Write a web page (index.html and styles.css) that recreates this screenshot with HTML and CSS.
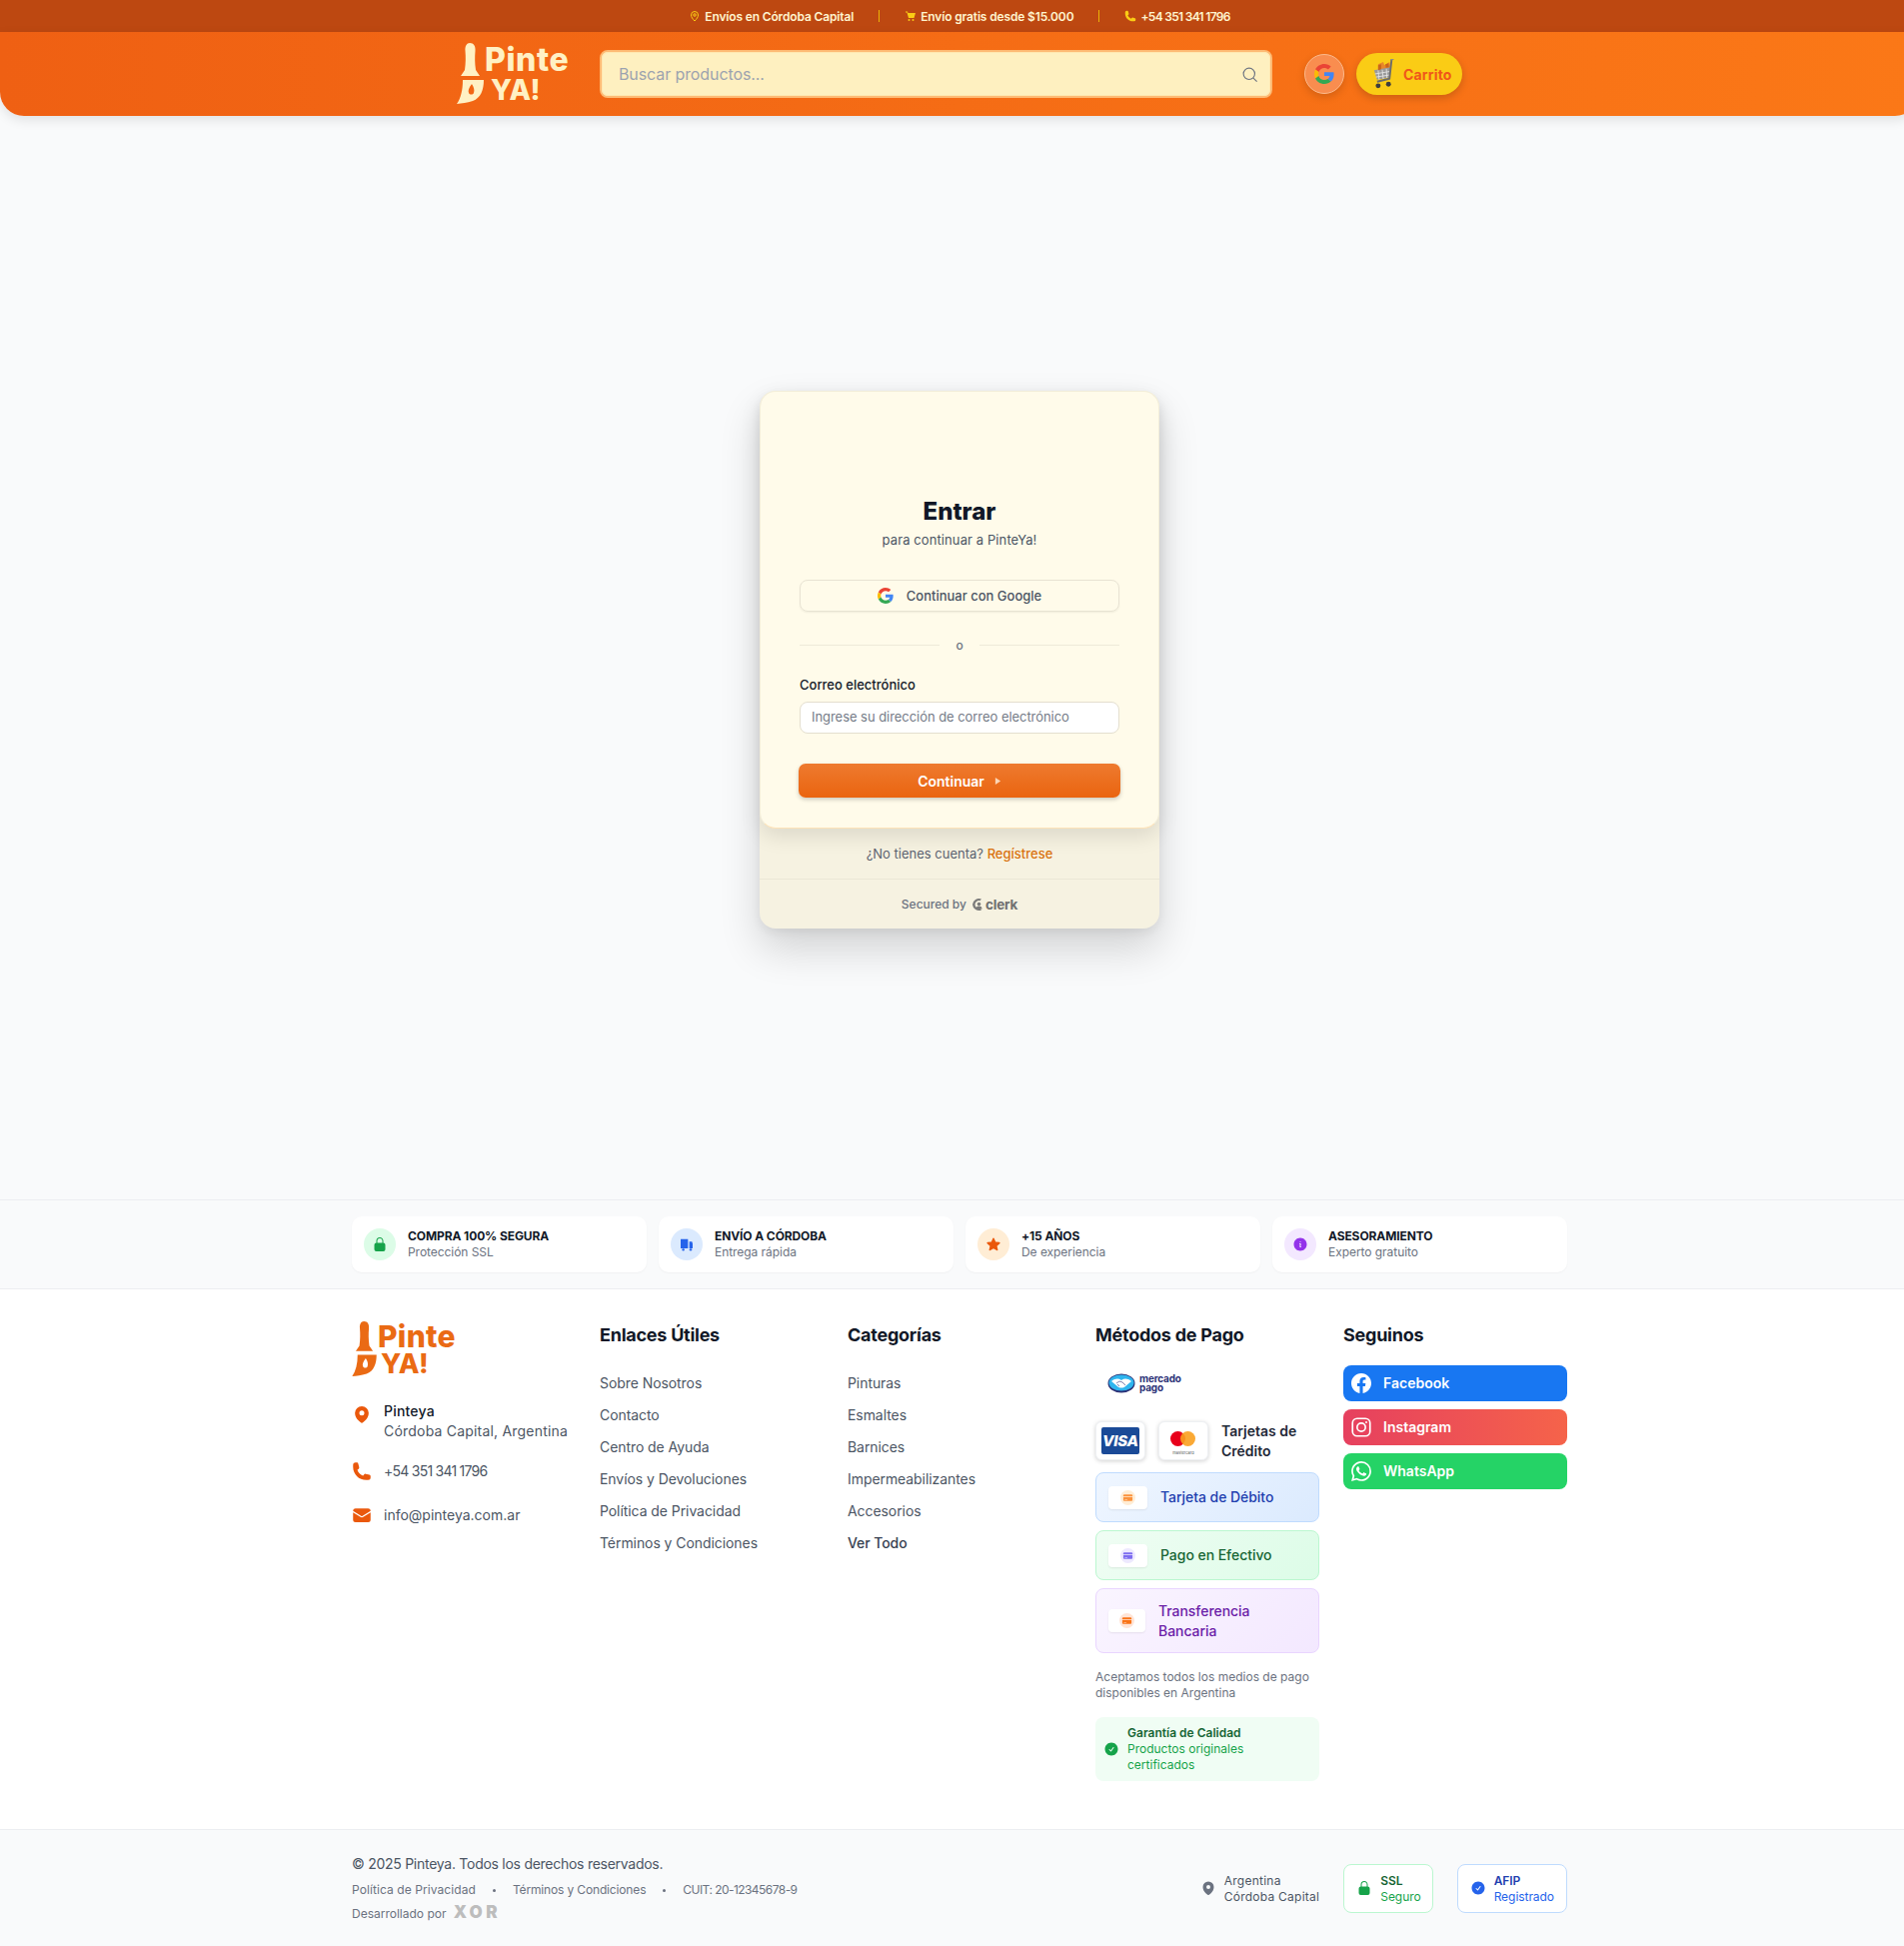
FILE: index.html
```html
<!DOCTYPE html>
<html lang="es">
  <head>
    <meta charset="UTF-8" />
    <meta name="viewport" content="width=device-width, initial-scale=1.0" />
    <title>Pinteya - Entrar</title>
    <link rel="stylesheet" href="styles.css">
  </head>
  <body>
    <svg class="sprite" xmlns="http://www.w3.org/2000/svg">
      <symbol id="i-brush" viewBox="0 0 28 62">
        <path d="M13 0C17 0 19 3 18.5 8C18 14 18 20 19 27L23 33L4 33L8 27C9 20 9 14 8.5 8C8 3 10 0 13 0Z"/>
        <path fill-rule="evenodd" d="M6 37L27 37C27 47 24 55 16 58C10 60 5 60 0 61C4 55 6 47 6 37ZM15 41C12 45 11 48 12 50C13 52 16 52 17 50C18 47 17 44 15 41Z"/>
      </symbol>
      <symbol id="i-google" viewBox="0 0 48 48">
        <path fill="#EA4335" d="M24 9.5c3.54 0 6.71 1.22 9.21 3.6l6.85-6.85C35.9 2.38 30.47 0 24 0 14.62 0 6.51 5.38 2.56 13.22l7.98 6.19C12.43 13.72 17.74 9.5 24 9.5z"/>
        <path fill="#4285F4" d="M46.98 24.55c0-1.57-.15-3.09-.38-4.55H24v9.02h12.94c-.58 2.96-2.26 5.48-4.78 7.18l7.73 6c4.51-4.18 7.09-10.36 7.09-17.65z"/>
        <path fill="#FBBC05" d="M10.53 28.59c-.48-1.45-.76-2.99-.76-4.59s.27-3.14.76-4.59l-7.98-6.19C.92 16.46 0 20.12 0 24c0 3.88.92 7.54 2.56 10.78l7.97-6.19z"/>
        <path fill="#34A853" d="M24 48c6.48 0 11.93-2.13 15.89-5.81l-7.73-6c-2.15 1.45-4.92 2.3-8.16 2.3-6.26 0-11.57-4.22-13.47-9.91l-7.98 6.19C6.51 42.62 14.62 48 24 48z"/>
      </symbol>
      <symbol id="i-pin" viewBox="0 0 24 24">
        <path fill-rule="evenodd" d="M11.54 22.351l.07.04.028.016a.76.76 0 00.723 0l.028-.015.071-.041a16.975 16.975 0 001.144-.742 19.58 19.58 0 002.683-2.282c1.944-1.99 3.963-4.98 3.963-8.827a8.25 8.25 0 00-16.5 0c0 3.846 2.02 6.837 3.963 8.827a19.58 19.58 0 002.682 2.282 16.975 16.975 0 001.145.742zM12 13.5a3 3 0 100-6 3 3 0 000 6z"/>
      </symbol>
      <symbol id="i-phone" viewBox="0 0 24 24">
        <path d="M1.5 4.5a3 3 0 013-3h1.372c.86 0 1.61.586 1.819 1.42l1.105 4.423a1.875 1.875 0 01-.694 1.955l-1.293.97c-.135.101-.164.249-.126.352a11.285 11.285 0 006.697 6.697c.103.038.25.009.352-.126l.97-1.293a1.875 1.875 0 011.955-.694l4.423 1.105c.834.209 1.42.959 1.42 1.82V19.5a3 3 0 01-3 3h-2.25C8.552 22.5 1.5 15.448 1.5 6.75V4.5z"/>
      </symbol>
      <symbol id="i-mail" viewBox="0 0 24 24">
        <path d="M1.5 8.67v8.58a3 3 0 003 3h15a3 3 0 003-3V8.67l-8.928 5.493a3 3 0 01-3.144 0L1.5 8.67z"/>
        <path d="M22.5 6.908V6.75a3 3 0 00-3-3h-15a3 3 0 00-3 3v.158l9.714 5.978a1.5 1.5 0 001.572 0L22.5 6.908z"/>
      </symbol>
      <symbol id="i-lock" viewBox="0 0 24 24">
        <path fill-rule="evenodd" d="M12 1.5a5.25 5.25 0 00-5.25 5.25v3a3 3 0 00-3 3v6.75a3 3 0 003 3h10.5a3 3 0 003-3v-6.75a3 3 0 00-3-3v-3c0-2.9-2.35-5.25-5.25-5.25zm3.75 8.25v-3a3.75 3.75 0 10-7.5 0v3h7.5z"/>
      </symbol>
      <symbol id="i-check" viewBox="0 0 24 24">
        <path fill-rule="evenodd" d="M2.25 12c0-5.385 4.365-9.75 9.75-9.75s9.75 4.365 9.75 9.75-4.365 9.75-9.75 9.75S2.25 17.385 2.25 12zm13.36-1.814a.75.75 0 10-1.22-.872l-3.236 4.53L9.53 12.22a.75.75 0 00-1.06 1.06l2.25 2.25a.75.75 0 001.14-.094l3.75-5.25z"/>
      </symbol>
      <symbol id="i-card" viewBox="0 0 24 24">
        <path d="M2 7a2 2 0 012-2h16a2 2 0 012 2v2H2V7z"/>
        <path d="M2 11h20v6a2 2 0 01-2 2H4a2 2 0 01-2-2v-6zm3 4v1.5h6V15H5z" fill-rule="evenodd"/>
      </symbol>
    </svg>

    <div class="page">
      <div class="topbar">
        <span class="topbar-item">
          <svg class="topbar-icon topbar-icon-line" viewBox="0 0 24 24"><path d="M12 22c-4-4-7-8-7-12a7 7 0 0 1 14 0c0 4-3 8-7 12z"/><circle cx="12" cy="10" r="2.5"/></svg>
          Envíos en Córdoba Capital
        </span>
        <span class="topbar-sep"></span>
        <span class="topbar-item">
          <svg class="topbar-icon" viewBox="0 0 24 24"><path d="M2 3h4l1 3h15l-3 10H8L5 5H2z"/><circle cx="9" cy="20" r="2"/><circle cx="17" cy="20" r="2"/></svg>
          Envío gratis desde $15.000
        </span>
        <span class="topbar-sep"></span>
        <span class="topbar-item topbar-tel"><svg class="topbar-icon"><use href="#i-phone"/></svg>+54 351 341 1796</span>
      </div>

      <header class="header">
        <a class="logo logo-light">
          <svg class="logo-brush"><use href="#i-brush"/></svg>
          <span class="logo-text"><span>Pinte</span><span class="logo-ya">YA!</span></span>
        </a>
        <div class="search">
          <span class="search-text">Buscar productos...</span>
          <svg class="search-icon" viewBox="0 0 24 24"><circle cx="11" cy="11" r="8"/><path d="M17 17l5 5"/></svg>
        </div>
        <div class="user-btn"><svg class="user-g"><use href="#i-google"/></svg></div>
        <div class="cart-btn">
          <svg class="cart-img" viewBox="0 0 24 30">
            <path d="M20 1l3-1" stroke="#8a8a8a" stroke-width="1.600" fill="none"/>
            <path d="M8 5l5-2 1 3 5-3 1 6-12 3z" fill="#e8872a"/>
            <path d="M4 11l16-3-1 10-12 2z" fill="#9a9a9a"/>
            <path d="M8 11l1 9M12 10.500l1 9M16 9.500l.5 9M5 14.500l15-2.500M6 17.500l13-2" stroke="#e8e8e8" stroke-width=".8" fill="none"/>
            <path d="M21 1l-2 18-12 3" stroke="#6b6b6b" stroke-width="1.800" fill="none"/>
            <path d="M8 6l3-1v5l-3 1zM15 5l3-1 .5 4-3 .5z" fill="#c9651a"/>
            <circle cx="8" cy="26" r="2.400" fill="#3d3d3d"/><circle cx="18" cy="24.500" r="2.400" fill="#3d3d3d"/>
          </svg>
          Carrito
        </div>
      </header>

      <main class="main">
        <div class="login">
          <div class="login-card">
            <h1>Entrar</h1>
            <p class="login-sub">para continuar a PinteYa!</p>
            <div class="google-btn"><svg class="g-icon"><use href="#i-google"/></svg>Continuar con Google</div>
            <div class="divider"><span></span><b>o</b><span></span></div>
            <label class="field-label">Correo electrónico</label>
            <div class="field-input">Ingrese su dirección de correo electrónico</div>
            <div class="submit-btn">Continuar <svg class="submit-arrow" viewBox="0 0 8 8"><path d="M1 0l6 4-6 4z"/></svg></div>
          </div>
          <div class="login-foot">
            <div class="login-signup">¿No tienes cuenta? <a>Regístrese</a></div>
            <div class="login-secured">
              Secured by
              <svg class="clerk-mark" viewBox="0 0 14 14"><path d="M11 1.500A6.500 6.500 0 0 0 2 7a6.500 6.500 0 0 0 9 5.500l-1.600-1.700A4 4 0 0 1 4.500 7 4 4 0 0 1 9.400 3.200z"/><circle cx="8.500" cy="6.500" r="1.800"/><path d="M5.500 11.500a3 3 0 0 1 6 0z"/></svg>
              <span class="clerk-word">clerk</span>
            </div>
          </div>
        </div>
      </main>

      <section class="trust">
        <div class="wrap trust-grid">
          <div class="trust-item">
            <span class="trust-ic ic-green"><svg><use href="#i-lock"/></svg></span>
            <div><strong>COMPRA 100% SEGURA</strong><small>Protección SSL</small></div>
          </div>
          <div class="trust-item">
            <span class="trust-ic ic-blue">
              <svg viewBox="0 0 24 24"><path d="M3 4h11v14H3zM16 8h4l1 3v7h-5z"/><circle cx="7" cy="20" r="1.800"/><circle cx="18" cy="20" r="1.800"/></svg>
            </span>
            <div><strong>ENVÍO A CÓRDOBA</strong><small>Entrega rápida</small></div>
          </div>
          <div class="trust-item">
            <span class="trust-ic ic-orange">
              <svg viewBox="0 0 24 24"><path d="M10.788 3.21c.448-1.077 1.976-1.077 2.424 0l2.082 5.007 5.404.433c1.164.093 1.636 1.545.749 2.305l-4.117 3.527 1.257 5.273c.271 1.136-.964 2.033-1.96 1.425L12 18.354 7.373 21.18c-.996.608-2.231-.29-1.96-1.425l1.257-5.273-4.117-3.527c-.887-.76-.415-2.212.749-2.305l5.404-.433 2.082-5.006z"/></svg>
            </span>
            <div><strong>+15 AÑOS</strong><small>De experiencia</small></div>
          </div>
          <div class="trust-item">
            <span class="trust-ic ic-purple">
              <svg viewBox="0 0 24 24"><path fill-rule="evenodd" d="M2.25 12c0-5.385 4.365-9.750 9.750-9.750s9.750 4.365 9.750 9.750-4.365 9.750-9.750 9.750S2.250 17.385 2.250 12zm8.706-1.442c1.146-.573 2.437.463 2.126 1.706l-.709 2.836.042-.02a.75.75 0 01.67 1.34l-.04.022c-1.147.573-2.438-.463-2.127-1.706l.71-2.836-.042.02a.75.75 0 11-.671-1.34l.041-.022zM12 9a.75.75 0 100-1.500.75.75 0 000 1.500z"/></svg>
            </span>
            <div><strong>ASESORAMIENTO</strong><small>Experto gratuito</small></div>
          </div>
        </div>
      </section>

      <footer class="footer">
        <div class="wrap footer-grid">
          <div class="col">
            <a class="logo logo-foot">
              <svg class="logo-brush"><use href="#i-brush"/></svg>
              <span class="logo-text"><span>Pinte</span><span class="logo-ya">YA!</span></span>
            </a>
            <ul class="contact">
              <li><svg class="contact-pin"><use href="#i-pin"/></svg><div class="contact-addr"><b>Pinteya</b><br>Córdoba Capital, Argentina</div></li>
              <li><svg><use href="#i-phone"/></svg><div class="contact-tel">+54 351 341 1796</div></li>
              <li><svg><use href="#i-mail"/></svg><div>info@pinteya.com.ar</div></li>
            </ul>
          </div>
          <div class="col">
            <h3>Enlaces Útiles</h3>
            <ul class="links">
              <li>Sobre Nosotros</li>
              <li>Contacto</li>
              <li>Centro de Ayuda</li>
              <li>Envíos y Devoluciones</li>
              <li>Política de Privacidad</li>
              <li>Términos y Condiciones</li>
            </ul>
          </div>
          <div class="col">
            <h3>Categorías</h3>
            <ul class="links">
              <li>Pinturas</li>
              <li>Esmaltes</li>
              <li>Barnices</li>
              <li>Impermeabilizantes</li>
              <li>Accesorios</li>
              <li class="links-strong">Ver Todo</li>
            </ul>
          </div>
          <div class="col">
            <h3>Métodos de Pago</h3>
            <div class="mp">
              <svg class="mp-mark" viewBox="0 0 28 20">
                <ellipse cx="14" cy="10" rx="13.500" ry="9.500" fill="#2d3277"/>
                <ellipse cx="14" cy="9.500" rx="12.500" ry="8" fill="#2fb5ee"/>
                <path d="M4 8c4-3 7-3 10-1 3-2 6-2 10 1l-6 5c-2 2-6 2-8 0z" fill="#fff"/>
                <path d="M9 10l3-2 3 1 3 3M12 13l-2-2" stroke="#2d3277" stroke-width=".6" fill="none"/>
              </svg>
              <span class="mp-word">mercado<br>pago</span>
            </div>
            <div class="cards-row">
              <div class="card-chip"><span class="visa">VISA</span></div>
              <div class="card-chip">
                <div class="mc"><span class="mc-red"></span><span class="mc-yellow"></span><small>mastercard</small></div>
              </div>
              <div class="cards-text">Tarjetas de Crédito</div>
            </div>
            <div class="pay-row pay-blue">
              <span class="pay-chip"><span class="pay-dot dot-orange"><svg><use href="#i-card"/></svg></span></span>Tarjeta de Débito
            </div>
            <div class="pay-row pay-green">
              <span class="pay-chip"><span class="pay-dot dot-violet"><svg><use href="#i-card"/></svg></span></span>Pago en Efectivo
            </div>
            <div class="pay-row pay-purple">
              <span class="pay-chip pay-chip-sm"><span class="pay-dot dot-peach"><svg><use href="#i-card"/></svg></span></span>Transferencia Bancaria
            </div>
            <p class="pay-note">Aceptamos todos los medios de pago disponibles en Argentina</p>
            <div class="quality">
              <svg><use href="#i-check"/></svg>
              <div><b>Garantía de Calidad</b><span>Productos originales certificados</span></div>
            </div>
          </div>
          <div class="col">
            <h3 class="h-social">Seguinos</h3>
            <div class="social">
              <a class="social-btn fb">
                <svg viewBox="0 0 24 24"><path d="M24 12.073c0-6.627-5.373-12-12-12s-12 5.373-12 12c0 5.990 4.388 10.954 10.125 11.854v-8.385H7.078v-3.470h3.047V9.430c0-3.007 1.792-4.669 4.533-4.669 1.312 0 2.686.235 2.686.235v2.953H15.830c-1.491 0-1.956.925-1.956 1.874v2.250h3.328l-.532 3.470h-2.796v8.385C19.612 23.027 24 18.062 24 12.073z"/></svg>
                Facebook
              </a>
              <a class="social-btn ig">
                <svg viewBox="0 0 24 24" class="ig-svg"><rect x="1.500" y="1.500" width="21" height="21" rx="5.500"/><circle cx="12" cy="12" r="5"/><circle class="ig-dot" cx="18" cy="6" r="1.200"/></svg>
                Instagram
              </a>
              <a class="social-btn wa">
                <svg viewBox="0 0 24 24"><path d="M17.472 14.382c-.297-.149-1.758-.867-2.030-.967-.273-.099-.471-.148-.670.150-.197.297-.767.966-.940 1.164-.173.199-.347.223-.644.075-.297-.150-1.255-.463-2.390-1.475-.883-.788-1.480-1.761-1.653-2.059-.173-.297-.018-.458.130-.606.134-.133.298-.347.446-.520.149-.174.198-.298.298-.497.099-.198.050-.371-.025-.520-.075-.149-.669-1.612-.916-2.207-.242-.579-.487-.500-.669-.510-.173-.008-.371-.010-.570-.010-.198 0-.520.074-.792.372-.272.297-1.040 1.016-1.040 2.479 0 1.462 1.065 2.875 1.213 3.074.149.198 2.096 3.200 5.077 4.487.709.306 1.262.489 1.694.625.712.227 1.360.195 1.871.118.571-.085 1.758-.719 2.006-1.413.248-.694.248-1.289.173-1.413-.074-.124-.272-.198-.570-.347m-5.421 7.403h-.004a9.870 9.870 0 01-5.031-1.378l-.361-.214-3.741.982.998-3.648-.235-.374a9.860 9.860 0 01-1.510-5.260c.001-5.450 4.436-9.884 9.888-9.884 2.640 0 5.122 1.030 6.988 2.898a9.825 9.825 0 012.893 6.994c-.003 5.450-4.437 9.884-9.885 9.884m8.413-18.297A11.815 11.815 0 0012.050 0C5.495 0 .160 5.335.157 11.892c0 2.096.547 4.142 1.588 5.945L.057 24l6.305-1.654a11.882 11.882 0 005.683 1.448h.005c6.554 0 11.890-5.335 11.893-11.893a11.821 11.821 0 00-3.480-8.413z"/></svg>
                WhatsApp
              </a>
            </div>
          </div>
        </div>
      </footer>

      <section class="bottom">
        <div class="wrap bottom-row">
          <div class="legal">
            <p class="copy">© 2025 Pinteya. Todos los derechos reservados.</p>
            <p class="legal-links"><span>Política de Privacidad</span><i></i><span>Términos y Condiciones</span><i></i><span>CUIT: 20-12345678-9</span></p>
            <p class="legal-dev">Desarrollado por <span class="xor">XOR</span></p>
          </div>
          <div class="badges">
            <div class="place"><svg><use href="#i-pin"/></svg><div>Argentina<br>Córdoba Capital</div></div>
            <div class="badge badge-green"><svg><use href="#i-lock"/></svg><div><b>SSL</b><span>Seguro</span></div></div>
            <div class="badge badge-blue"><svg><use href="#i-check"/></svg><div><b>AFIP</b><span>Registrado</span></div></div>
          </div>
        </div>
      </section>
    </div>
  </body>
</html>
```

FILE: styles.css
```css
html,
body {
  margin: 0;
  overflow-x: hidden;
}
body {
  font-family: 'Inter', 'Liberation Sans', sans-serif;
  background: #f9fafb;
  color: #111827;
}
.sprite {
  display: none;
}
.page {
  width: 1920px;
}
ul {
  list-style: none;
  margin: 0;
  padding: 0;
}
p {
  margin: 0;
}
.wrap {
  width: 1216px;
  margin: 0 auto;
}

/* top bar */
.topbar {
  height: 32px;
  background: #bd4811;
  color: #fff4cf;
  font-size: 12px;
  font-weight: 600;
  display: flex;
  align-items: center;
  justify-content: center;
  gap: 25px;
  letter-spacing: -0.15px;
}
.topbar-item {
  display: flex;
  align-items: center;
  gap: 4px;
}
.topbar-tel {
  letter-spacing: -0.7px;
}
.topbar-icon {
  width: 12px;
  height: 12px;
  fill: #facc15;
}
.topbar-icon-line {
  fill: none;
  stroke: #facc15;
  stroke-width: 2;
}
.topbar-sep {
  width: 1px;
  height: 12px;
  background: #eab308;
}

/* header */
.header {
  height: 84px;
  background: linear-gradient(90deg, #ef6013 0%, #fb7817 100%);
  border-radius: 0 0 24px 24px;
  display: flex;
  align-items: center;
  justify-content: center;
  box-shadow: 0 4px 12px rgba(0, 0, 0, 0.1);
  position: relative;
}
.logo {
  display: flex;
  align-items: flex-start;
  font-weight: 800;
}
.logo-brush {
  flex: none;
  fill: currentColor;
}
.logo-text {
  display: flex;
  flex-direction: column;
}
.logo-ya {
  margin-left: 6px;
}
.logo-light {
  width: 113px;
  color: #fff1c4;
  margin-right: 30px;
}
.logo-light .logo-brush {
  width: 28px;
  height: 62px;
}
.logo-light .logo-text {
  font-size: 32px;
  line-height: 33px;
  letter-spacing: 0.6px;
}
.logo-light .logo-ya {
  font-size: 28px;
  line-height: 29px;
  letter-spacing: -0.4px;
}
.logo-foot {
  color: #ea6a14;
}
.logo-foot .logo-brush {
  width: 26px;
  height: 56px;
}
.logo-foot .logo-text {
  font-size: 30px;
  line-height: 30px;
  letter-spacing: 0.3px;
}
.logo-foot .logo-ya {
  margin-left: 3px;
  font-size: 27px;
  line-height: 26px;
  letter-spacing: -0.4px;
}
.search {
  width: 673px;
  height: 48px;
  box-sizing: border-box;
  background: #fef0c0;
  border: 2px solid #fdba74;
  outline: 1px solid #ffe7b0;
  outline-offset: -3px;
  border-radius: 8px;
  display: flex;
  align-items: center;
  justify-content: space-between;
  padding: 0 12px 0 17px;
  font-size: 16px;
  color: #9ca3af;
  letter-spacing: -0.1px;
  margin-right: 32px;
}
.search-icon {
  width: 17px;
  height: 17px;
  fill: none;
  stroke: #6b7280;
  stroke-width: 1.6;
}
.user-btn {
  width: 40px;
  height: 40px;
  border-radius: 50%;
  background: #f98d4f;
  border: 1px solid #fdba8c;
  box-sizing: border-box;
  display: flex;
  align-items: center;
  justify-content: center;
  margin-right: 12px;
  box-shadow: 0 3px 8px rgba(0, 0, 0, 0.15);
}
.user-g {
  width: 20px;
  height: 20px;
}
.cart-btn {
  width: 106px;
  height: 42px;
  background: #facc15;
  border-radius: 21px;
  display: flex;
  align-items: center;
  gap: 8px;
  padding-left: 13px;
  box-sizing: border-box;
  font-size: 14px;
  font-weight: 700;
  letter-spacing: 0.15px;
  color: #f0561a;
  box-shadow: 0 3px 8px rgba(0, 0, 0, 0.18);
}
.cart-img {
  flex: none;
  width: 26px;
  height: 31px;
}

/* login */
.main {
  height: 1084px;
  box-sizing: border-box;
  padding-top: 4px;
  display: flex;
  align-items: center;
  justify-content: center;
}
.login {
  width: 400px;
  border-radius: 16px;
  background: #f6f2e1;
  box-shadow: 0 20px 40px rgba(0, 0, 0, 0.16), 0 4px 10px rgba(0, 0, 0, 0.06);
}
.login-card {
  height: 438px;
  box-sizing: border-box;
  background: #fffbea;
  border-radius: 16px;
  padding: 104px 40px 0;
  box-shadow: 0 8px 20px rgba(0, 0, 0, 0.1);
  border: 1px solid #f3eeda;
  border-bottom-color: #fde2b8;
  text-align: center;
}
h1 {
  margin: 0;
  font-size: 24px;
  line-height: 32px;
  font-weight: 800;
}
.login-sub {
  font-size: 13px;
  line-height: 20px;
  margin-top: 2px;
  color: #4b5563;
  letter-spacing: 0.1px;
}
.google-btn {
  height: 32px;
  margin: 30px -1px 0;
  box-sizing: border-box;
  border: 1px solid #e8e3d3;
  border-radius: 8px;
  box-shadow: 0 1px 2px rgba(0, 0, 0, 0.06);
  display: flex;
  align-items: center;
  justify-content: center;
  gap: 13px;
  font-size: 13px;
  font-weight: 500;
  color: #4b5563;
}
.g-icon {
  width: 16px;
  height: 16px;
}
.divider {
  display: flex;
  align-items: center;
  gap: 16px;
  height: 16px;
  margin: 25px -1px 0;
}
.divider span {
  flex: 1;
  height: 1px;
  background: #eeead9;
}
.divider b {
  font-size: 12px;
  font-weight: 500;
  color: #6b7280;
}
.field-label {
  display: block;
  text-align: left;
  margin: 24px -1px 0;
  font-size: 13px;
  line-height: 16px;
  font-weight: 500;
}
.field-input {
  height: 32px;
  margin: 9px -1px 0;
  box-sizing: border-box;
  background: #fff;
  border: 1px solid #e4dfcf;
  border-radius: 8px;
  padding: 0 11px;
  text-align: left;
  font-size: 13px;
  line-height: 29px;
  letter-spacing: -0.05px;
  color: #757b87;
}
.submit-btn {
  height: 34px;
  margin: 30px -2px 0;
  background: linear-gradient(180deg, #ee7a2f 0%, #ea640f 100%);
  border-radius: 7px;
  box-shadow: 0 2px 4px rgba(0, 0, 0, 0.2);
  display: flex;
  align-items: center;
  justify-content: center;
  gap: 10px;
  color: #fff;
  font-size: 14px;
  font-weight: 600;
}
.submit-arrow {
  width: 7px;
  height: 7px;
  fill: #fbd5b5;
}
.login-foot {
  font-size: 13px;
  color: #5b6270;
  text-align: center;
}
.login-signup {
  height: 50px;
  line-height: 51px;
  border-bottom: 1px solid #ebe7d6;
}
.login-signup a {
  color: #d9720f;
  font-weight: 500;
}
.login-secured {
  height: 49px;
  display: flex;
  align-items: center;
  justify-content: center;
  gap: 4px;
  font-size: 12px;
  font-weight: 500;
  color: #6b7280;
}
.clerk-mark {
  width: 14px;
  height: 14px;
  fill: #7a7a7a;
}
.clerk-word {
  margin-left: -3px;
  font-size: 13.5px;
  font-weight: 700;
  letter-spacing: -0.2px;
  color: #6f6f6f;
}

/* trust */
.trust {
  height: 90px;
  box-sizing: border-box;
  padding-top: 16px;
  background: #f9fafb;
  border-top: 1px solid #eceef1;
  border-bottom: 1px solid #eceef1;
}
.trust-grid {
  display: grid;
  grid-template-columns: repeat(4, 1fr);
  gap: 12px;
}
.trust-item {
  height: 56px;
  box-sizing: border-box;
  background: #fff;
  border-radius: 10px;
  box-shadow: 0 1px 2px rgba(0, 0, 0, 0.04);
  display: flex;
  align-items: center;
  gap: 12px;
  padding: 0 12px;
  font-size: 12px;
  line-height: 16px;
}
.trust-item strong {
  display: block;
  font-weight: 700;
  letter-spacing: -0.1px;
}
.trust-item small {
  display: block;
  font-size: 12px;
  color: #6b7280;
  letter-spacing: -0.05px;
}
.trust-ic {
  width: 32px;
  height: 32px;
  border-radius: 50%;
  display: flex;
  align-items: center;
  justify-content: center;
}
.trust-ic svg {
  width: 16px;
  height: 16px;
  fill: currentColor;
}
.ic-green {
  background: #dcfce7;
  color: #16a34a;
}
.ic-blue {
  background: #dbeafe;
  color: #2563eb;
}
.ic-orange {
  background: #ffedd5;
  color: #ea580c;
}
.ic-purple {
  background: #f3e8ff;
  color: #9333ea;
}

/* footer */
.footer {
  background: #fff;
  height: 540px;
  box-sizing: border-box;
  padding-top: 32px;
}
.footer-grid {
  display: grid;
  grid-template-columns: repeat(5, 224px);
  gap: 24px;
}
h3 {
  margin: 0 0 24px;
  font-size: 18px;
  line-height: 28px;
  font-weight: 700;
  letter-spacing: -0.25px;
}
.h-social {
  margin-bottom: 15.5px;
}
.contact {
  margin-top: 24px;
  font-size: 14px;
  line-height: 20px;
  color: #4b5563;
}
.contact li {
  display: flex;
  gap: 12px;
  margin-bottom: 24px;
}
.contact li:first-child {
  margin-bottom: 20px;
}
.contact-addr {
  letter-spacing: 0.2px;
}
.contact-tel {
  letter-spacing: -0.75px;
}
.contact svg {
  width: 20px;
  height: 20px;
  flex: none;
  fill: #ea580c;
  margin-top: 0;
}
.contact .contact-pin {
  margin-top: 3px;
}
.contact b {
  font-weight: 500;
  color: #111827;
}
.links {
  font-size: 14px;
  line-height: 20px;
  color: #4b5563;
  letter-spacing: -0.07px;
}
.links li {
  margin-bottom: 12px;
}
.links-strong {
  color: #374151;
  font-weight: 500;
}
.mp {
  height: 20px;
  margin: 0 0 28px 12px;
  display: flex;
  align-items: center;
  gap: 4px;
}
.mp-mark {
  width: 28px;
  height: 20px;
}
.mp-word {
  font-size: 10px;
  line-height: 9px;
  font-weight: 700;
  color: #2d3277;
  letter-spacing: -0.2px;
}
.cards-row {
  display: flex;
  align-items: center;
  height: 39px;
  margin-bottom: 12px;
}
.card-chip {
  width: 50px;
  height: 39px;
  box-sizing: border-box;
  background: #fff;
  border: 1px solid #eef0f3;
  border-radius: 6px;
  box-shadow: 0 1px 4px rgba(0, 0, 0, 0.18);
  padding: 5px;
  margin-right: 13px;
  display: flex;
}
.visa {
  flex: 1;
  background: #1a4a97;
  border-radius: 2px;
  color: #fff;
  font-size: 15px;
  font-weight: 800;
  font-style: italic;
  text-align: center;
  line-height: 27px;
  letter-spacing: -0.3px;
}
.mc {
  flex: 1;
  position: relative;
}
.mc-red,
.mc-yellow {
  position: absolute;
  top: 4px;
  width: 15px;
  height: 15px;
  border-radius: 50%;
}
.mc-red {
  left: 6px;
  background: #e8001b;
}
.mc-yellow {
  left: 16px;
  background: #f9a01f;
  opacity: 0.9;
}
.mc small {
  position: absolute;
  left: 0;
  right: 0;
  bottom: -1px;
  font-size: 4px;
  line-height: 5px;
  text-align: center;
  color: #555;
}
.cards-text {
  font-size: 14px;
  line-height: 20px;
  font-weight: 600;
  color: #1f2937;
  width: 90px;
}
.pay-row {
  min-height: 50px;
  box-sizing: border-box;
  margin-bottom: 8px;
  padding: 11.5px 12px;
  border-radius: 8px;
  border: 1px solid;
  display: flex;
  align-items: center;
  gap: 13px;
  font-size: 14px;
  line-height: 20px;
  font-weight: 500;
  letter-spacing: -0.05px;
}
.pay-blue {
  background: linear-gradient(135deg, #eff6ff, #dbeafe);
  border-color: #bfdbfe;
  color: #1e40af;
}
.pay-green {
  background: linear-gradient(135deg, #f0fdf4, #dcfce7);
  border-color: #bbf7d0;
  color: #166534;
}
.pay-purple {
  background: linear-gradient(135deg, #faf5ff, #f3e8ff);
  border-color: #e9d5ff;
  color: #6b21a8;
}
.pay-chip {
  width: 39px;
  height: 23px;
  flex: none;
  background: #fff;
  border-radius: 4px;
  box-shadow: 0 1px 2px rgba(0, 0, 0, 0.08);
  display: flex;
  align-items: center;
  justify-content: center;
}
.pay-chip-sm {
  width: 37px;
}
.pay-dot {
  width: 15px;
  height: 15px;
  border-radius: 50%;
  display: flex;
  align-items: center;
  justify-content: center;
}
.pay-dot svg {
  width: 11px;
  height: 11px;
  fill: currentColor;
}
.dot-orange {
  background: #ffedd5;
  color: #fb923c;
}
.dot-violet {
  background: #ede9fe;
  color: #7c6cf0;
}
.dot-peach {
  background: #ffe4d6;
  color: #f97316;
}
.pay-note {
  margin-top: 16px;
  font-size: 12px;
  line-height: 16px;
  color: #6b7280;
}
.quality {
  margin-top: 16px;
  box-sizing: border-box;
  height: 64px;
  background: #f0fdf4;
  border-radius: 8px;
  padding: 8px 8px;
  display: flex;
  align-items: center;
  gap: 8px;
  font-size: 12px;
  line-height: 16px;
  color: #16a34a;
}
.quality svg {
  width: 16px;
  height: 16px;
  flex: none;
  fill: #16a34a;
}
.quality b {
  display: block;
  font-weight: 600;
  color: #166534;
}
.social {
  display: flex;
  flex-direction: column;
  gap: 8px;
}
.social-btn {
  height: 36px;
  border-radius: 8px;
  display: flex;
  align-items: center;
  gap: 12px;
  padding-left: 8px;
  color: #fff;
  font-size: 14px;
  font-weight: 600;
}
.social-btn svg {
  width: 20px;
  height: 20px;
  fill: currentColor;
}
.fb {
  background: #1877f2;
}
.ig {
  background: linear-gradient(90deg, #e6405f 0%, #f5634a 100%);
}
.wa {
  background: #25d366;
}
.social-btn .ig-svg {
  fill: none;
  stroke: #fff;
  stroke-width: 2;
}
.social-btn .ig-dot {
  fill: #fff;
  stroke: none;
}

/* bottom */
.bottom {
  border-top: 1px solid #eceef1;
  background: #f9fafb;
  padding: 24px 0;
}
.bottom-row {
  display: flex;
  align-items: center;
  justify-content: space-between;
}
.copy {
  font-size: 14px;
  line-height: 20px;
  color: #4b5563;
  letter-spacing: -0.27px;
}
.legal-links {
  margin-top: 8px;
  display: flex;
  align-items: center;
  gap: 17px;
  font-size: 12px;
  line-height: 16px;
  color: #6b7280;
  letter-spacing: -0.15px;
}
.legal-links span:first-child {
  letter-spacing: 0.08px;
}
.legal-links span:last-child {
  letter-spacing: -0.55px;
}
.legal-links i {
  width: 3px;
  height: 3px;
  border-radius: 50%;
  background: #6b7280;
}
.legal-dev {
  margin-top: 8px;
  height: 16px;
  font-size: 12px;
  line-height: 12px;
  color: #6b7280;
}
.xor {
  margin-left: 4px;
  font-size: 17px;
  line-height: 12px;
  font-weight: 900;
  letter-spacing: 3.5px;
  color: #bdbdbd;
}
.badges {
  display: flex;
  align-items: center;
  gap: 24px;
}
.place {
  display: flex;
  align-items: center;
  gap: 8px;
  font-size: 12px;
  line-height: 16px;
  color: #4b5563;
  letter-spacing: 0.25px;
}
.place div,
.badge div {
  padding-top: 2px;
}
.place svg {
  width: 16px;
  height: 16px;
  fill: #6b7280;
}
.badge {
  height: 49px;
  box-sizing: border-box;
  display: flex;
  align-items: center;
  gap: 8px;
  padding: 0 11px 0 12px;
  background: #fff;
  border: 1px solid;
  border-radius: 8px;
  font-size: 12px;
  line-height: 16px;
  letter-spacing: -0.05px;
}
.badge svg {
  width: 16px;
  height: 16px;
  fill: currentColor;
}
.badge b {
  display: block;
  font-weight: 600;
}
.badge-green {
  border-color: #bbf7d0;
  color: #16a34a;
}
.badge-green b {
  color: #166534;
}
.badge-blue {
  padding-right: 12px;
  border-color: #bfdbfe;
  color: #2563eb;
}
.badge-blue b {
  color: #1e40af;
}
```
